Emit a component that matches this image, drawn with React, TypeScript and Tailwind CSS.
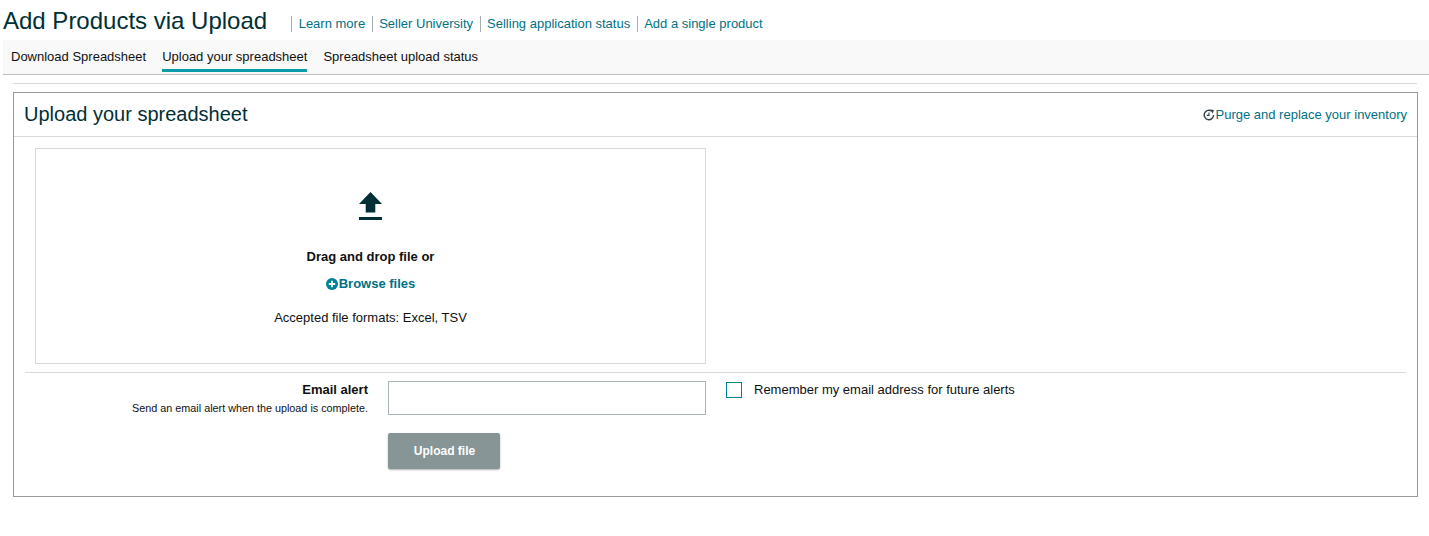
const links = ["Learn more", "Seller University", "Selling application status", "Add a single product"];

function UploadIcon() {
  return (
    <svg width="23" height="28" viewBox="0 0 24 28" preserveAspectRatio="none" fill="#002f36" className="block">
      <path d="M12 0 L24 12 L17 12 L17 20.5 L7 20.5 L7 12 L0 12 Z" />
      <rect x="0" y="25" width="24" height="3" />
    </svg>
  );
}

function PlusIcon() {
  return (
    <svg width="12" height="12" viewBox="0 0 12 12" className="block">
      <circle cx="6" cy="6" r="6" fill="#008296" />
      <path d="M6 2.8 V9.2 M2.8 6 H9.2" stroke="#fff" strokeWidth="1.8" />
    </svg>
  );
}

function PurgeIcon() {
  return (
    <svg width="12" height="12" viewBox="0 0 12 12" fill="none" stroke="#333f48" strokeWidth="1.4" className="block">
      <path d="M10.6 6 A4.7 4.7 0 1 1 8.8 2.3" />
      <path d="M7.4 0.4 L11 1 L9.6 4.4 Z" fill="#333f48" stroke="none" />
      <path d="M6 3.6 V6.4 H3.8" strokeWidth="1.1" />
    </svg>
  );
}

export default function App() {
  return (
    <div className="min-h-[536px] bg-white font-['Liberation_Sans',Arial,sans-serif] text-[#0f1111]">
      <div className="flex h-10 items-start pl-[3px]">
        <h1 className="mt-[6px] text-[24px] leading-[30px] text-[#002f36]">Add Products via Upload</h1>
        <div className="ml-[24px] mt-[16px] flex">
          {links.map((l) => (
            <a key={l} className="h-4 border-l border-[#a6b0b3] px-[6.5px] text-[13px] leading-4 text-[#007185]">
              {l}
            </a>
          ))}
        </div>
      </div>

      <div className="ml-[3px] flex h-[35px] items-start gap-4 border-b border-[#bbbfbf] bg-[#f9f9f9] pl-2">
        {["Download Spreadsheet", "Upload your spreadsheet", "Spreadsheet upload status"].map((t, i) => (
          <div
            key={t}
            className={
              i === 1
                ? "h-[32px] border-b-[3px] border-[#0a9bab] pt-[9px] text-[13px] leading-4 text-[#0f1111]"
                : "h-[32px] pt-[9px] text-[13px] leading-4 text-[#0f1111]"
            }
          >
            {t}
          </div>
        ))}
      </div>

      <div className="mx-[13px] mt-2 h-[1px] w-[1404px] bg-[#d5dbdb]" />

      <div className="ml-[13px] mt-2 h-[405px] w-[1405px] border border-[#999999]">
        <div className="flex h-[44px] items-center justify-between border-b border-[#d5dbdb] pl-[10px] pr-[10px]">
          <h2 className="pb-[2px] text-[20px] leading-6 text-[#002f36]">Upload your spreadsheet</h2>
          <a className="flex items-center text-[13px] leading-4 text-[#007185]">
            <PurgeIcon />
            Purge and replace your inventory
          </a>
        </div>

        <div className="ml-[21px] mt-[11px] flex h-[216px] w-[671px] flex-col items-center border border-[#d5dbdb] pt-[43px]">
          <UploadIcon />
          <div className="mt-[29px] text-[13px] font-bold leading-4 text-[#0f1111]">Drag and drop file or</div>
          <a className="mt-[11px] flex items-center text-[13px] font-bold leading-4 text-[#007185]">
            <PlusIcon />
            <span className="ml-px">Browse files</span>
          </a>
          <div className="mt-[18px] text-[13px] leading-4 text-[#0f1111]">Accepted file formats: Excel, TSV</div>
        </div>

        <div className="mx-[11px] mt-2 h-px bg-[#d5dbdb]" />

        <div className="mt-2 flex items-start">
          <div className="mt-px w-[354px] shrink-0 text-right">
            <div className="text-[13px] font-bold leading-4">Email alert</div>
            <div className="mt-[3px] text-[10.8px] leading-[14px]">Send an email alert when the upload is complete.</div>
          </div>
          <div className="ml-5 w-[318px] shrink-0">
            <input className="block h-[34px] w-full border border-[#a6b5b5] bg-white outline-none" />
            <button className="mt-[18px] h-[36px] w-[112px] rounded-[2px] bg-[#879596] pl-[1px] text-[12px] font-bold text-white shadow-[0_1px_2px_rgba(0,0,0,0.3)]">
              Upload file
            </button>
          </div>
          <div className="ml-5 mt-px flex items-center">
            <span className="h-4 w-4 border border-[#008296] bg-white" />
            <span className="ml-3 text-[13px] leading-4">Remember my email address for future alerts</span>
          </div>
        </div>
      </div>
    </div>
  );
}
